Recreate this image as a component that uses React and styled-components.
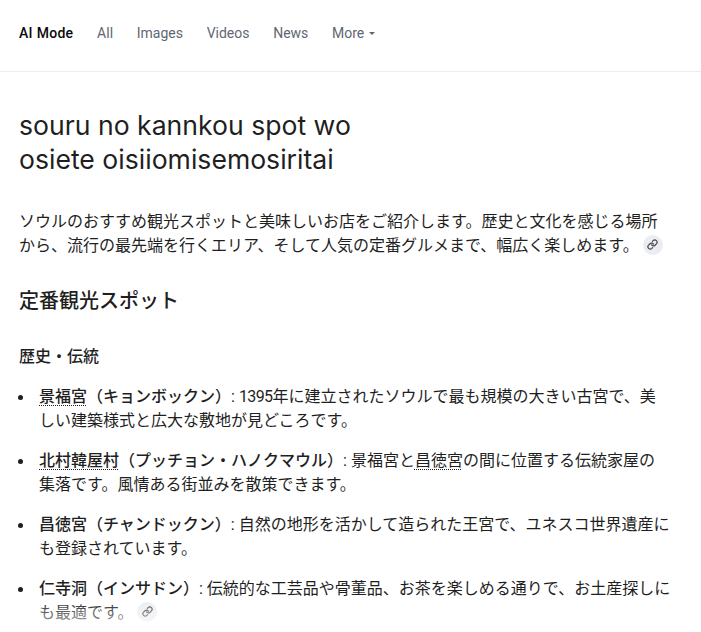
import React from "react";
import styled, { createGlobalStyle } from "styled-components";

const Global = createGlobalStyle`
  html, body { margin: 0; padding: 0; background: #fff; }
  body { width: 701px; height: 632px; overflow: hidden; font-family: Roboto, "Noto Sans CJK JP", sans-serif; color: #1f1f1f; }
`;
const Page = styled.div`
  position: relative;
  width: 701px;
  height: 632px;
  overflow: hidden;
`;
const Nav = styled.nav`
  display: flex;
  align-items: center;
  gap: 23.7px;
  height: 72px;
  padding: 0 19px 5px;
  box-sizing: border-box;
  border-bottom: 1px solid #ecedef;
`;
const Tab = styled.span`
  font-size: 14px;
  letter-spacing: ${p => (p.$active ? "0.3px" : "0")};
  font-weight: ${p => (p.$active ? 500 : 400)};
  color: ${p => (p.$active ? "#0a0a0a" : "#5f6673")};
  display: inline-flex;
  align-items: center;
  gap: 5px;
`;
const Caret = styled.i`
  width: 0;
  height: 0;
  border-left: 3.5px solid transparent;
  border-right: 3.5px solid transparent;
  border-top: 3.5px solid #5f6673;
`;
const Main = styled.main`
  padding: 36px 19px 0;
  width: 654px;
`;
const Title = styled.h1`
  margin: 0 0 34px;
  font-family: Inter, sans-serif;
  font-size: 26.6px;
  line-height: 34px;
  font-weight: 400;
  color: #1f1f1f;
  width: 400px;
`;
const Para = styled.p`
  margin: 0;
  font-size: 16px;
  line-height: 24px;
  color: #1f1f1f;
`;
const Heading = styled.h2`
  margin: 29px 0 0;
  font-size: 20px;
  line-height: 28px;
  font-weight: 500;
`;
const Sub = styled.h3`
  margin: 30px 0 0;
  font-size: 16px;
  line-height: 24px;
  font-weight: 500;
`;
const List = styled.ul`
  list-style: none;
  margin: 16px 0 0;
  padding: 0;
  display: flex;
  flex-direction: column;
  gap: 16px;
`;
const Item = styled.li`
  position: relative;
  padding-left: 20px;
  font-size: 16px;
  line-height: 24px;
  &::before {
    content: "";
    position: absolute;
    left: -1px;
    top: 10px;
    width: 5px;
    height: 5px;
    border-radius: 50%;
    background: #1f1f1f;
  }
`;
const Term = styled.strong`
  font-weight: 500;
`;
const Digits = styled.span`
  letter-spacing: -0.6px;
`;
const Dotted = styled.span`
  text-decoration: underline dotted #1f1f1f 1px;
  text-underline-offset: 3px;
`;
const Chip = styled.span`
  display: inline-flex;
  align-items: center;
  justify-content: center;
  width: 20px;
  height: 20px;
  margin-left: 4px;
  border-radius: 50%;
  background: #ecedf2;
  color: #474747;
  vertical-align: 1px;
`;
const Fade = styled.div`
  position: absolute;
  left: 0;
  right: 0;
  bottom: 0;
  height: 32px;
  background: linear-gradient(to bottom, rgba(255,255,255,0), rgba(255,255,255,0.8));
  pointer-events: none;
`;

const LinkIcon = () => (
  <Chip>
    <svg width="11" height="11" viewBox="0 0 24 24" fill="none" stroke="currentColor" strokeWidth="2.6" strokeLinecap="round" strokeLinejoin="round">
      <path d="M10 13a5 5 0 0 0 7.54.54l3-3a5 5 0 0 0-7.07-7.07l-1.72 1.71" />
      <path d="M14 11a5 5 0 0 0-7.54-.54l-3 3a5 5 0 0 0 7.07 7.07l1.71-1.71" />
    </svg>
  </Chip>
);

export default function App() {
  return (
    <Page>
      <Global />
      <Nav>
        <Tab $active>AI Mode</Tab>
        <Tab>All</Tab>
        <Tab>Images</Tab>
        <Tab>Videos</Tab>
        <Tab>News</Tab>
        <Tab>More<Caret /></Tab>
      </Nav>
      <Main>
        <Title>souru no kannkou spot wo osiete oisiiomisemosiritai</Title>
        <Para>
          ソウルのおすすめ観光スポットと美味しいお店をご紹介します。歴史と文化を感じる場所から、流行の最先端を行くエリア、そして人気の定番グルメまで、幅広く楽しめます。<LinkIcon />
        </Para>
        <Heading>定番観光スポット</Heading>
        <Sub>歴史・伝統</Sub>
        <List>
          <Item><Term><Dotted>景福宮</Dotted>（キョンボックン）</Term>: <Digits>1395</Digits>年に建立されたソウルで最も規模の大きい古宮で、美<br />しい建築様式と広大な敷地が見どころです。</Item>
          <Item><Term><Dotted>北村韓屋村</Dotted>（プッチョン・ハノクマウル）</Term>: 景福宮と<Dotted>昌徳宮</Dotted>の間に位置する伝統家屋の<br />集落です。風情ある街並みを散策できます。</Item>
          <Item><Term>昌徳宮（チャンドックン）</Term>: 自然の地形を活かして造られた王宮で、ユネスコ世界遺産にも登録されています。</Item>
          <Item><Term>仁寺洞（インサドン）</Term>: 伝統的な工芸品や骨董品、お茶を楽しめる通りで、お土産探しにも最適です。<LinkIcon /></Item>
        </List>
      </Main>
      <Fade />
    </Page>
  );
}
